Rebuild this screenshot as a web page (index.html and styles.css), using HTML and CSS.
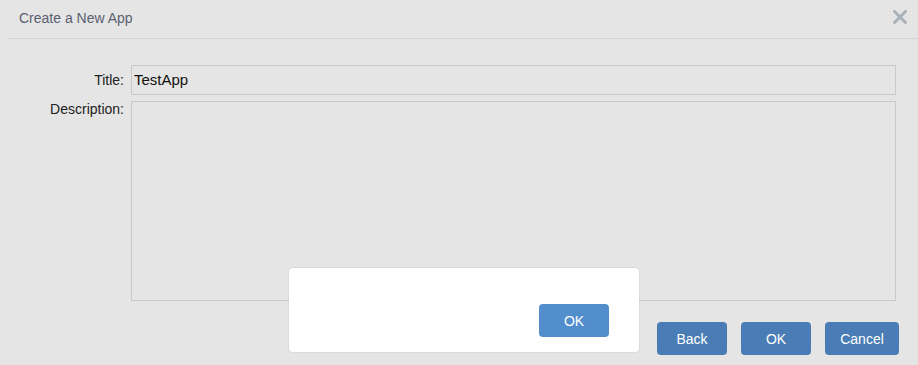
FILE: index.html
```html
<!DOCTYPE html>
<html>
<head>
<meta charset="utf-8">
<link rel="stylesheet" href="styles.css">
</head>
<body>
<div class="window">
  <div class="header">
    <span class="header-title">Create a New App</span>
    <svg class="close" width="14" height="14" viewBox="0 0 14 14"><path d="M1.5 1.5 L12.5 12.5 M12.5 1.5 L1.5 12.5" stroke="#a9b1b9" stroke-width="3" stroke-linecap="square"/></svg>
  </div>
  <div class="form">
    <label class="label label-title">Title:</label>
    <div class="input">TestApp</div>
    <label class="label label-desc">Description:</label>
    <div class="textarea"></div>
  </div>
  <div class="actions">
    <button class="btn">Back</button>
    <button class="btn">OK</button>
    <button class="btn btn-wide">Cancel</button>
  </div>
  <div class="dialog">
    <button class="btn btn-dialog">OK</button>
  </div>
</div>
</body>
</html>
```
FILE: styles.css
```css
html, body {
  margin: 0;
  padding: 0;
  background: #e5e5e5;
  font-family: "Liberation Sans", Arial, sans-serif;
  font-size: 14px;
}
.window {
  position: relative;
  width: 918px;
  height: 365px;
  overflow: hidden;
}
.header {
  margin-left: 9px;
  border-bottom: 1px solid #d0d5db;
  display: flex;
  align-items: center;
  justify-content: space-between;
  padding-left: 10px;
  padding-right: 11px;
  box-sizing: border-box;
  height: 39px;
}
.header-title {
  color: #5b6070;
  font-size: 14px;
  margin-top: -2px;
}
.close {
  display: block;
  margin-top: -5px;
}
.form {
  display: grid;
  grid-template-columns: 124px 765px;
  column-gap: 7px;
  row-gap: 6px;
  margin-top: 26px;
}
.label {
  text-align: right;
  color: #222;
  font-size: 14px;
}
.label-title {
  align-self: center;
}
.label-desc {
  line-height: 16px;
}
.input {
  height: 30px;
  box-sizing: border-box;
  border: 1px solid #c9c9c9;
  padding: 0 2px;
  line-height: 28px;
  color: #111;
  font-size: 15px;
}
.textarea {
  height: 200px;
  box-sizing: border-box;
  border: 1px solid #c9c9c9;
}
.actions {
  display: flex;
  justify-content: flex-end;
  gap: 14px;
  margin-top: 21px;
  padding-right: 19px;
}
.btn {
  width: 70px;
  height: 33px;
  border: none;
  border-radius: 4px;
  background: #4a7db5;
  color: #fff;
  font-family: "Liberation Sans", Arial, sans-serif;
  font-size: 14px;
  padding: 0;
}
.btn-wide {
  width: 74px;
}
.dialog {
  position: absolute;
  left: 289px;
  top: 268px;
  width: 350px;
  height: 84px;
  box-sizing: border-box;
  background: #fff;
  border-radius: 4px;
  box-shadow: 0 0 2px rgba(0,0,0,0.15);
  display: flex;
  justify-content: flex-end;
  align-items: flex-end;
  padding: 0 30px 15px 0;
}
.btn-dialog {
  background: #538ecc;
}
```
